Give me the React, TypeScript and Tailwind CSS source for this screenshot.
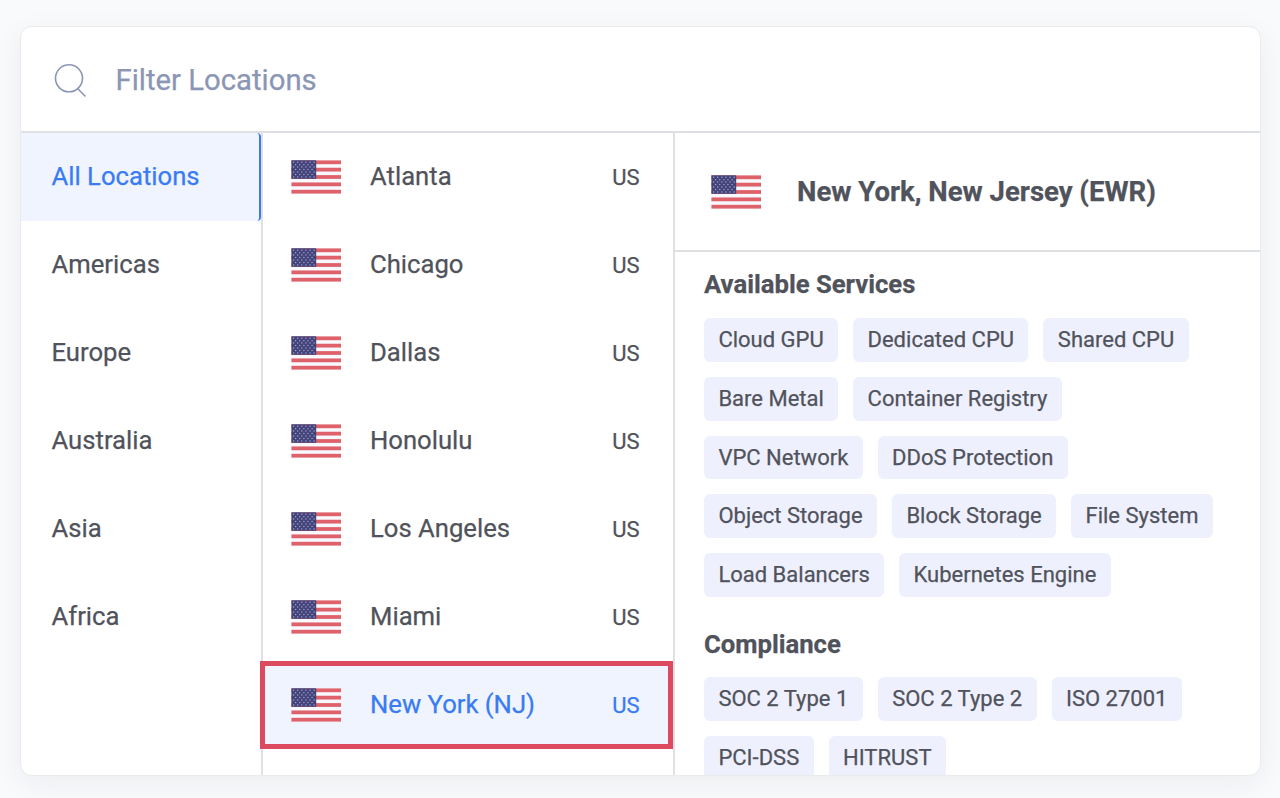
import React from 'react';

const regions = ['All Locations', 'Americas', 'Europe', 'Australia', 'Asia', 'Africa'];

const locations = [
  { name: 'Atlanta', country: 'US' },
  { name: 'Chicago', country: 'US' },
  { name: 'Dallas', country: 'US' },
  { name: 'Honolulu', country: 'US' },
  { name: 'Los Angeles', country: 'US' },
  { name: 'Miami', country: 'US' },
  { name: 'New York (NJ)', country: 'US' }
];

const services = [
  ['Cloud GPU', 'Dedicated CPU', 'Shared CPU'],
  ['Bare Metal', 'Container Registry'],
  ['VPC Network', 'DDoS Protection'],
  ['Object Storage', 'Block Storage', 'File System'],
  ['Load Balancers', 'Kubernetes Engine']
];

const compliance = [
  ['SOC 2 Type 1', 'SOC 2 Type 2', 'ISO 27001'],
  ['PCI-DSS', 'HITRUST']
];

const UsFlag = () => (
  <svg viewBox="0 0 50 34" className="h-[34px] w-[50px] shrink-0">
    <rect x="0.4" y="0.3" width="49.6" height="33.4" fill="#f8f9fe" />
    {[0, 1, 2, 3, 4].map((i) => (
      <rect key={i} x="0.4" y={0.4 + i * 7.35} width="49.6" height="3.8" fill="#df626a" />
    ))}
    <rect x="0.4" y="0.3" width="24.8" height="18.5" fill="#43437c" />
    {[...Array(7)].map((_, row) =>
      [...Array(row % 2 ? 5 : 6)].map((_, col) => (
        <circle
          key={`${row}-${col}`}
          cx={2.6 + (row % 2 ? 2.05 : 0) + col * 4.1}
          cy={2.2 + row * 2.45}
          r="0.75"
          fill="#a3a3c6"
        />
      ))
    )}
  </svg>
);

const SearchIcon = () => (
  <svg viewBox="0 0 34 34" className="h-[34px] w-[34px] shrink-0" fill="none" stroke="#8b96b4" strokeWidth="1.6" strokeLinecap="round">
    <circle cx="16" cy="14.3" r="13.5" />
    <path d="M24.5 24.5 L32 32" />
  </svg>
);

const ChipRows = ({ rows }: { rows: string[][] }) => (
  <div className="flex flex-col gap-[15px]">
    {rows.map((row, index) => (
      <div key={index} className="flex gap-[15px]">
        {row.map((label) => (
          <span
            key={label}
            className="h-[43.67px] rounded-md bg-[#eff0fe] px-[14.4px] text-[22px] leading-[43.67px] whitespace-nowrap text-[#50535b]"
          >
            {label}
          </span>
        ))}
      </div>
    ))}
  </div>
);

const App = () => {
  const activeRegion = 'All Locations';
  const activeLocation = 'New York (NJ)';

  return (
    <div className="h-[798px] w-full overflow-hidden bg-[#f9fafc] pt-[26px] pr-[19px] pl-5 font-['Roboto',sans-serif] text-[#50535b] [-webkit-text-stroke:0.25px]">
      <div className="flex h-[750px] flex-col overflow-hidden rounded-xl border border-[#eaebed] bg-white shadow-[0_8px_30px_rgba(30,35,50,0.06)]">
        {/* Filter */}
        <div className="flex h-[106px] shrink-0 items-center border-b-2 border-[#dfe0e3] pt-[3px] pl-8">
          <SearchIcon />
          <span className="ml-[28.5px] text-[29.3px] text-[#8b96b4]">Filter Locations</span>
        </div>

        <div className="flex min-h-0 flex-1">
          {/* Regions */}
          <div className="w-[242px] shrink-0 border-r-2 border-[#dfe0e3]">
            {regions.map((region) => (
              <div
                key={region}
                className={`flex h-[88px] items-center pb-px pl-[30.5px] text-[25.67px] ${
                  region === activeRegion ? 'rounded-r-sm border-r-2 border-[#397bf3] bg-[#eff4fe] text-[#397bf3]' : ''
                }`}
              >
                {region}
              </div>
            ))}
          </div>

          {/* Locations */}
          <div className="w-[412px] shrink-0 border-r-2 border-[#dfe0e3]">
            {locations.map((location) => (
              <div
                key={location.name}
                className={`flex h-[88px] items-center ${
                  location.name === activeLocation
                    ? '-ml-[3px] border-[5px] border-[#dc4a60] bg-[#eff4fe] pr-[28.5px] pl-[26px] text-[#397bf3]'
                    : 'pr-[33.5px] pl-[28px]'
                }`}
              >
                <UsFlag />
                <span className="ml-[29px] flex-1 pb-px text-[25.67px]">{location.name}</span>
                <span className="text-[22px]">{location.country}</span>
              </div>
            ))}
          </div>

          {/* Location details */}
          <div className="min-w-0 flex-1">
            <div className="flex h-[119px] items-center border-b-2 border-[#dfe0e3] pl-[36px]">
              <UsFlag />
              <h2 className="ml-[36px] pt-px text-[27.5px] font-bold">New York, New Jersey (EWR)</h2>
            </div>
            <div className="pt-[13px] pl-[29px]">
              <h3 className="mb-[15.4px] text-[25.67px] leading-[38px] font-bold">Available Services</h3>
              <ChipRows rows={services} />
              <h3 className="mt-[28px] mb-[14.7px] text-[25.67px] leading-[38px] font-bold">Compliance</h3>
              <ChipRows rows={compliance} />
            </div>
          </div>
        </div>
      </div>
    </div>
  );
};

export default App;
